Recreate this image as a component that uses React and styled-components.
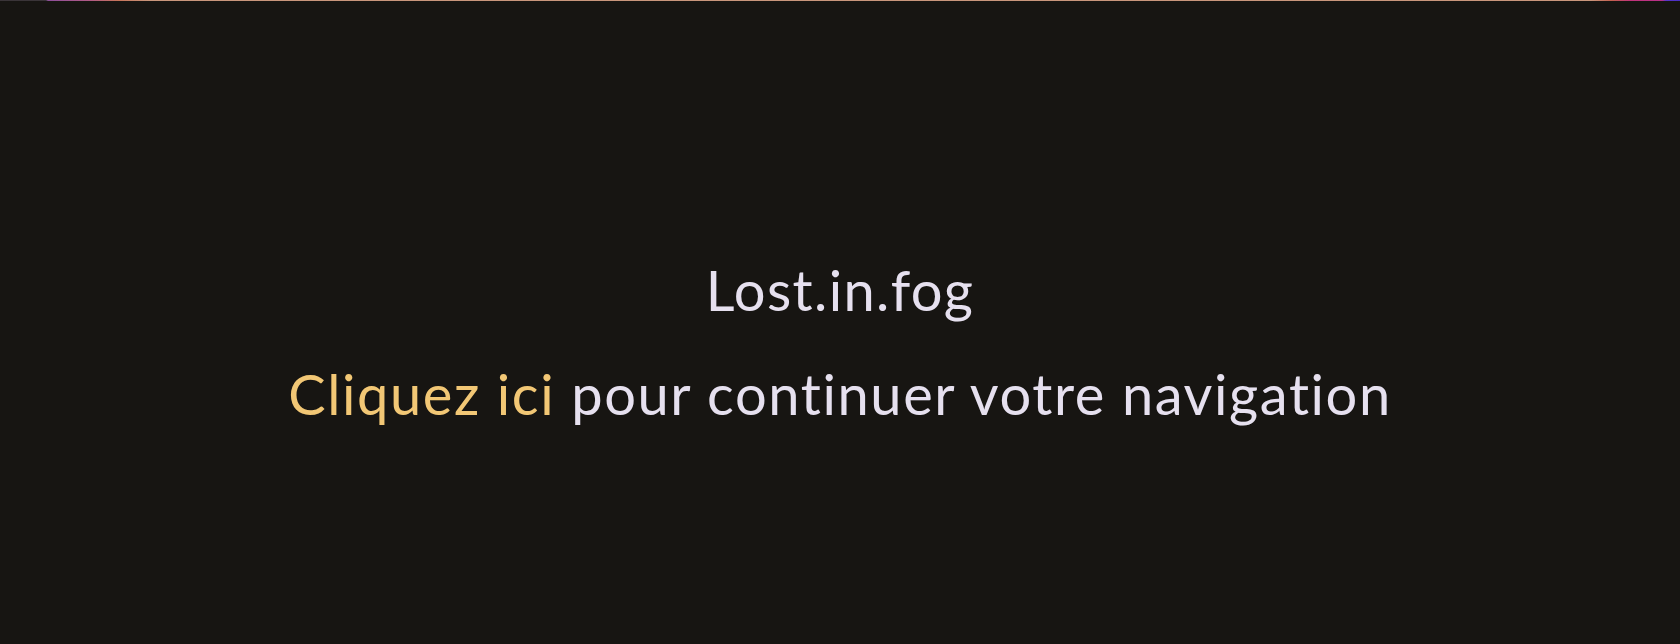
import styled, { createGlobalStyle } from 'styled-components';

const GlobalStyle = createGlobalStyle`
  html, body {
    margin: 0;
    padding: 0;
    background: #171512;
  }
  #root {
    min-height: 100vh;
  }
`;

const Page = styled.main`
  min-height: 100vh;
  background: #171512;
  display: flex;
  flex-direction: column;
  font-family: 'Lato', 'Noto Sans', sans-serif;
  font-variant-ligatures: none;
  color: #e6e0ef;
`;

// thin progress-like line at the very top
const TopLine = styled.div`
  height: 1px;
  background: linear-gradient(
    90deg,
    #3a3438 0px,
    #3a3438 46px,
    #8e4f9a 48px,
    #b25a86 90px,
    #c7745a 118px,
    #c9967c 150px,
    #c9967c 1590px,
    #c4604f 1612px,
    #c2347a 1630px,
    #b8308a 1662px,
    #5a36c8 1666px,
    #4a2fc4 1680px
  );
`;

const Center = styled.section`
  flex: 1;
  display: flex;
  flex-direction: column;
  align-items: center;
  justify-content: flex-start;
  padding-top: 257px;
  gap: 40px;
`;

const Title = styled.h1`
  margin: 0;
  font-size: 56px;
  font-weight: 400;
  line-height: 64px;
  letter-spacing: 1.4px;
`;

const Message = styled.p`
  margin: 0;
  font-size: 56px;
  font-weight: 400;
  line-height: 64px;
  letter-spacing: 1.6px;
`;

const Link = styled.a`
  color: #f2c775;
  text-decoration: none;
  cursor: pointer;
`;

export default function App() {
  return (
    <>
      <GlobalStyle />
      <Page>
        <TopLine />
        <Center>
          <Title>Lost.in.fog</Title>
          <Message>
            <Link href="#">Cliquez ici</Link> pour continuer votre navigation
          </Message>
        </Center>
      </Page>
    </>
  );
}
